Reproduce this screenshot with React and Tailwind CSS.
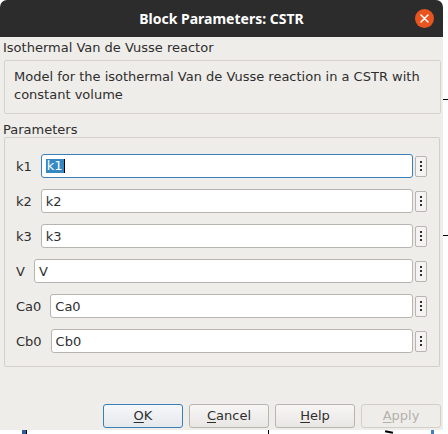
import React from "react";

const font = { fontFamily: '"DejaVu Sans", sans-serif' };

function Mn({ text }) {
  return (
    <span>
      <span className="underline underline-offset-[2px]">{text[0]}</span>
      {text.slice(1)}
    </span>
  );
}

function Row({ label, value, focused }) {
  return (
    <div className="flex items-center h-[24px]">
      <span className="text-[13px] text-[#2e2e2e] leading-none">{label}</span>
      <div
        className={
          "ml-[9px] flex-1 h-[24px] bg-white rounded-[3px] border flex items-center pl-[4px] " +
          (focused ? "border-[#3a7fb8]" : "border-[#b8b5b0]")
        }
      >
        {focused ? (
          <span className="flex items-center">
            <span className="bg-[#3589c3] text-white text-[13px] leading-[14px] px-[1px]">{value}</span>
            <span className="w-[1px] h-[14px] bg-black"></span>
          </span>
        ) : (
          <span className="text-[13px] text-[#2e2e2e] leading-none">{value}</span>
        )}
      </div>
      <div className="ml-[2px] w-[12px] h-[21px] rounded-[2px] border border-[#b8b5b0] bg-[#f4f3f1] flex flex-col items-center justify-center gap-[2px]">
        <span className="w-[2px] h-[2px] bg-[#2e2e2e]"></span>
        <span className="w-[2px] h-[2px] bg-[#2e2e2e]"></span>
        <span className="w-[2px] h-[2px] bg-[#2e2e2e]"></span>
      </div>
    </div>
  );
}

function Btn({ text, primary, disabled }) {
  return (
    <div
      className={
        "w-[80px] h-[24px] rounded-[3px] border flex items-center justify-center text-[13px] " +
        (primary
          ? "border-[#3a7fb8] bg-gradient-to-b from-[#f5f7f9] to-[#e6e9ec] text-[#2e2e2e]"
          : disabled
          ? "border-[#d2cfca] bg-[#efedea] text-[#b4b1ac]"
          : "border-[#b8b5b0] bg-gradient-to-b from-[#f7f6f5] to-[#e9e7e4] text-[#2e2e2e]")
      }
    >
      <Mn text={text} />
    </div>
  );
}

export default function App() {
  const rows = [
    ["k1", "k1", true],
    ["k2", "k2"],
    ["k3", "k3"],
    ["V", "V"],
    ["Ca0", "Ca0"],
    ["Cb0", "Cb0"],
  ];
  return (
    <div className="relative w-[448px] h-[434px] bg-white overflow-hidden" style={font}>
      {/* background diagram bits */}
      <div className="absolute left-[443px] top-[99px] w-[5px] h-[1px] bg-black"></div>
      <div className="absolute left-[443px] top-[235px] w-[5px] h-[1px] bg-black"></div>
      <div className="absolute left-[22px] top-[430px] w-[4px] h-[4px] bg-[#2f5f9a]"></div>
      <div className="absolute left-[26px] top-[430px] w-[1px] h-[4px] bg-black"></div>
      <div className="absolute left-[268px] top-[430px] w-[1px] h-[4px] bg-black"></div>
      <div className="absolute left-[385px] top-[431px] w-[8px] h-[2px] bg-black rotate-12"></div>
      <div className="absolute left-[431px] top-[430px] w-[3px] h-[4px] bg-[#3f7fc0]"></div>

      <div className="relative w-[443px] h-[430px] flex flex-col">
        <div className="h-[37px] bg-[#2c2c2c] rounded-t-[7px] flex items-center justify-center relative">
          <span
            className="text-white text-[14px] font-bold"
            style={{ fontFamily: '"Noto Sans", sans-serif' }}
          >
            Block Parameters: CSTR
          </span>
          <div className="absolute left-[415px] top-[9px] w-[19px] h-[19px] rounded-full bg-[#e9541f] flex items-center justify-center">
            <svg width="9" height="9" viewBox="0 0 9 9">
              <path d="M1 1L8 8M8 1L1 8" stroke="white" strokeWidth="1.5" strokeLinecap="round" />
            </svg>
          </div>
        </div>
        <div className="flex-1 bg-[#efedea] flex flex-col text-[#2e2e2e]">
          <div className="pt-[2px] pl-[3px] text-[13px] leading-[17px]">Isothermal Van de Vusse reactor</div>
          <div className="mt-[4px] ml-[4px] mr-[2px] border border-[#d6d3ce] rounded-[2px] pt-[7px] pb-[9px] pl-[9px] text-[13px] leading-[18px]">
            Model for the isothermal Van de Vusse reaction in a CSTR with
            <br />
            constant volume
          </div>
          <div className="mt-[8px] pl-[3px] text-[13px] leading-[15px]">Parameters</div>
          <div className="ml-[4px] mr-[3px] border border-[#d3d0cb] rounded-[2px] pt-[16px] pb-[13px] pl-[11px] pr-[12px] flex flex-col gap-[11px]">
            {rows.map(([l, v, f]) => (
              <Row key={l} label={l} value={v} focused={f} />
            ))}
          </div>
          <div className="flex-1"></div>
          <div className="flex justify-end gap-[6px] pr-[2px] pb-[2px]">
            <Btn text="OK" primary />
            <Btn text="Cancel" />
            <Btn text="Help" />
            <Btn text="Apply" disabled />
          </div>
        </div>
      </div>
    </div>
  );
}
